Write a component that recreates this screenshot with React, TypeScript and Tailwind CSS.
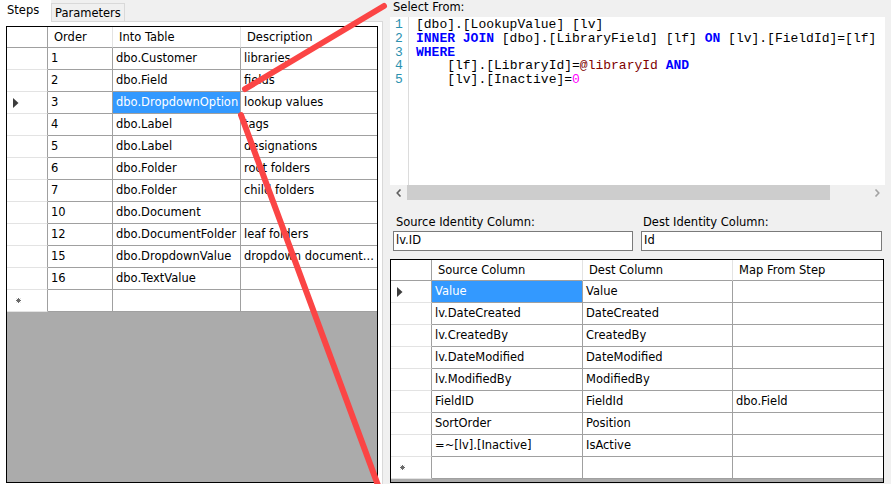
import React from "react";
import clsx from "clsx";

const UI = "font-['DejaVu_Sans',sans-serif] text-[11.5px] text-black";
const MONO = "font-['Liberation_Mono','Courier_New',monospace] text-[13px]";

// order, into table, description
const STEPS: string[][] = [
  ["1", "dbo.Customer", "libraries"],
  ["2", "dbo.Field", "fields"],
  ["3", "dbo.DropdownOption", "lookup values"],
  ["4", "dbo.Label", "tags"],
  ["5", "dbo.Label", "designations"],
  ["6", "dbo.Folder", "root folders"],
  ["7", "dbo.Folder", "child folders"],
  ["10", "dbo.Document", ""],
  ["12", "dbo.DocumentFolder", "leaf folders"],
  ["15", "dbo.DropdownValue", "dropdown document..."],
  ["16", "dbo.TextValue", ""],
];
const CURRENT_STEP = 2;

// source column, dest column, map from step
const MAPPINGS: string[][] = [
  ["Value", "Value", ""],
  ["lv.DateCreated", "DateCreated", ""],
  ["lv.CreatedBy", "CreatedBy", ""],
  ["lv.DateModified", "DateModified", ""],
  ["lv.ModifiedBy", "ModifiedBy", ""],
  ["FieldID", "FieldId", "dbo.Field"],
  ["SortOrder", "Position", ""],
  ["=~[lv].[Inactive]", "IsActive", ""],
];

function CurrentArrow() {
  return (
    <svg width="6" height="10" viewBox="0 0 6 10">
      <path d="M0 0 L5.5 5 L0 10 Z" fill="#3c3c3c" />
    </svg>
  );
}

function NewRowMark() {
  return (
    <svg width="5" height="5" viewBox="0 0 5 5">
      <g stroke="#6b6b6b" strokeWidth="1">
        <path d="M2.5 0V5M0 2.5H5M0.8 0.8L4.2 4.2M4.2 0.8L0.8 4.2" />
      </g>
    </svg>
  );
}

function RowHead({ mark, header }: { mark?: "current" | "new"; header?: boolean }) {
  return (
    <div
      className={clsx(
        "w-[41px] shrink-0 h-full flex items-center pl-[6px] bg-white border-r border-r-[#a0a0a0] border-b",
        header ? "border-b-[#a0a0a0]" : "border-b-[#e3e3e3]"
      )}
    >
      {mark === "current" && <CurrentArrow />}
      {mark === "new" && (
        <span className="pl-[3px] flex">
          <NewRowMark />
        </span>
      )}
    </div>
  );
}

function HeadCell({ w, text, last }: { w: string; text: string; last?: boolean }) {
  return (
    <div
      className={clsx(
        "h-full flex items-center pl-[6px] pt-[1px] bg-white border-b border-b-[#a0a0a0] whitespace-nowrap overflow-hidden",
        !last && "border-r border-r-[#e3e3e3]",
        w
      )}
    >
      {text}
    </div>
  );
}

function Cell({ w, text, selected, last }: { w: string; text: string; selected?: boolean; last?: boolean }) {
  return (
    <div
      className={clsx(
        "h-full flex items-center pl-[3px] pt-[1px] border-b border-[#a0a0a0] whitespace-nowrap overflow-hidden",
        !last && "border-r",
        selected ? "bg-[#3399ff] text-white" : "bg-white",
        w
      )}
    >
      {text}
    </div>
  );
}

function StepsGrid() {
  return (
    <div className="w-[372px] h-[457px] border border-black bg-[#ababab] flex flex-col">
      <div className="flex h-[21px] shrink-0">
        <RowHead header />
        <HeadCell w="w-[65px]" text="Order" />
        <HeadCell w="w-[128px]" text="Into Table" />
        <HeadCell w="flex-1 min-w-0" text="Description" last />
      </div>
      {STEPS.map((s, i) => (
        <div key={i} className="flex h-[22px] shrink-0">
          <RowHead mark={i === CURRENT_STEP ? "current" : undefined} />
          <Cell w="w-[65px]" text={s[0]} />
          <Cell w="w-[128px]" text={s[1]} selected={i === CURRENT_STEP} />
          <Cell w="flex-1 min-w-0" text={s[2]} last />
        </div>
      ))}
      <div className="flex h-[22px] shrink-0">
        <RowHead mark="new" />
        <Cell w="w-[65px]" text="" />
        <Cell w="w-[128px]" text="" />
        <Cell w="flex-1 min-w-0" text="" last />
      </div>
    </div>
  );
}

function MappingGrid() {
  return (
    <div className="w-[494px] h-[224px] border border-black bg-[#ababab] flex flex-col">
      <div className="flex h-[21px] shrink-0">
        <RowHead header />
        <HeadCell w="w-[151px]" text="Source Column" />
        <HeadCell w="w-[150px]" text="Dest Column" />
        <HeadCell w="flex-1 min-w-0" text="Map From Step" last />
      </div>
      {MAPPINGS.map((m, i) => (
        <div key={i} className="flex h-[22px] shrink-0">
          <RowHead mark={i === 0 ? "current" : undefined} />
          <Cell w="w-[151px]" text={m[0]} selected={i === 0} />
          <Cell w="w-[150px]" text={m[1]} />
          <Cell w="flex-1 min-w-0" text={m[2]} last />
        </div>
      ))}
      <div className="flex h-[22px] shrink-0">
        <RowHead mark="new" />
        <Cell w="w-[151px]" text="" />
        <Cell w="w-[150px]" text="" />
        <Cell w="flex-1 min-w-0" text="" last />
      </div>
    </div>
  );
}

const KW = "text-[#0000ff] font-bold";

function SqlEditor() {
  return (
    <div className="h-[183px] w-[495px] bg-white flex flex-col">
      <div className="flex-1 flex min-h-0">
        <div className={clsx("w-[19px] shrink-0 border-r border-[#dcdcdc] pl-[5px] pt-[1px] leading-[13.75px] text-[#2b91af]", MONO)}>
          <div>1</div>
          <div>2</div>
          <div>3</div>
          <div>4</div>
          <div>5</div>
        </div>
        <div className={clsx("flex-1 min-w-0 overflow-hidden pl-[7px] pt-[1px] leading-[13.75px] whitespace-pre text-black", MONO)}>
          <div>[dbo].[LookupValue] [lv]</div>
          <div>
            <span className={KW}>INNER JOIN</span> [dbo].[LibraryField] [lf] <span className={KW}>ON</span>{" "}
            [lv].[FieldId]=[lf]
          </div>
          <div>
            <span className={KW}>WHERE</span>
          </div>
          <div>
            {"    "}[lf].[LibraryId]=<span className="text-[#800000]">@libraryId</span> <span className={KW}>AND</span>
          </div>
          <div>
            {"    "}[lv].[Inactive]=<span className="text-[#ff00ff]">0</span>
          </div>
        </div>
      </div>
      <div className="h-[15px] shrink-0 flex bg-[#f0f0f0]">
        <div className="w-[17px] flex items-center justify-center">
          <svg width="6" height="8" viewBox="0 0 6 8">
            <path d="M4.5 0.5 L1.2 4 L4.5 7.5" fill="none" stroke="#606060" strokeWidth="1.6" />
          </svg>
        </div>
        <div className="w-[423px] bg-[#cdcdcd]" />
        <div className="flex-1" />
        <div className="w-[17px] flex items-center justify-center">
          <svg width="6" height="8" viewBox="0 0 6 8">
            <path d="M1.5 0.5 L4.8 4 L1.5 7.5" fill="none" stroke="#a3a3a3" strokeWidth="1.6" />
          </svg>
        </div>
      </div>
    </div>
  );
}

export default function App() {
  return (
    <div className={clsx("relative w-[891px] h-[484px] overflow-hidden bg-[#f0f0f0] flex", UI)}>
      {/* tab control */}
      <div className="w-[383px] shrink-0 flex flex-col">
        <div className="h-[22px] shrink-0 flex items-end">
          <div className="h-[22px] w-[51px] bg-white pl-[7px] pt-[4px] leading-[13px]">Steps</div>
          <div className="h-[19px] w-[74px] bg-[#f0f0f0] border border-[#d9d9d9] pl-[3px] pt-[3px] leading-[13px] whitespace-nowrap">
            Parameters
          </div>
          <div className="flex-1 h-full border-b border-[#d9d9d9]" />
        </div>
        <div className="flex-1 bg-white border-r border-[#d9d9d9] pl-[6px] pt-[4px]">
          <StepsGrid />
        </div>
      </div>

      {/* right side */}
      <div className="flex-1 flex flex-col pl-[7px]">
        <div className="h-[17px] shrink-0 pl-[3px] pt-[1px] leading-[13px]">Select From:</div>
        <SqlEditor />
        <div className="mt-[14px] flex gap-[8px] pl-[3px]">
          <div className="w-[240px] flex flex-col">
            <div className="h-[17px] pl-[3px] leading-[17px]">Source Identity Column:</div>
            <div className="h-[20px] border border-[#7a7a7a] bg-white pl-[2px] flex items-center">lv.ID</div>
          </div>
          <div className="w-[241px] flex flex-col">
            <div className="h-[17px] pl-[2px] leading-[17px]">Dest Identity Column:</div>
            <div className="h-[20px] border border-[#7a7a7a] bg-white pl-[2px] flex items-center">Id</div>
          </div>
        </div>
        <div className="mt-[8px]">
          <MappingGrid />
        </div>
      </div>

      {/* annotation strokes */}
      <svg className="absolute inset-0 pointer-events-none" width="891" height="484" viewBox="0 0 891 484">
        <g stroke="#fb4545" strokeWidth="6" strokeLinecap="round">
          <line x1="245" y1="89" x2="384" y2="6" />
          <line x1="241" y1="115" x2="379" y2="488" />
        </g>
      </svg>
    </div>
  );
}
